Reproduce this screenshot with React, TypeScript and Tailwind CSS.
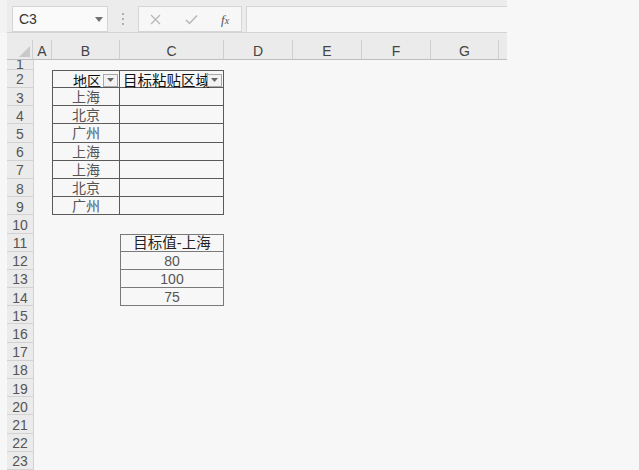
import React from "react";

const ROWS_H: number[] = (() => {
  const a = [9.5, 18.5];
  for (let i = 3; i <= 23; i++) a.push(18.19);
  return a;
})();

const CJK = "font-['Liberation_Sans','Noto_Sans_CJK_SC',sans-serif]";

function FilterBtn() {
  return (
    <div className="absolute right-[1px] top-[3px] w-[15px] h-[13px] border border-[#a8a8a8] bg-[#f2f2f2] flex items-center justify-center">
      <svg width="7" height="4" viewBox="0 0 7 4">
        <path d="M0 0 H7 L3.5 4 Z" fill="#666" />
      </svg>
    </div>
  );
}

function Row({ n }: { n: number }) {
  const h = ROWS_H[n - 1];
  const inT1 = n >= 2 && n <= 9;
  const inT2 = n >= 11 && n <= 14;
  const places: Record<number, string> = { 3: "上海", 4: "北京", 5: "广州", 6: "上海", 7: "上海", 8: "北京", 9: "广州" };
  const vals: Record<number, string> = { 12: "80", 13: "100", 14: "75" };

  let bCls = "w-[68px] h-full relative flex items-center justify-center pt-[1px]";
  let cCls = "w-[104px] h-full relative flex items-center justify-center pt-[1px]";
  if (inT1) {
    bCls += " border-l border-r border-b border-[#5a5a5a]";
    cCls += " border-r border-b border-[#5a5a5a]";
    if (n === 2) {
      bCls += " border-t";
      cCls += " border-t";
    }
  }
  if (inT2) {
    cCls += " border-l border-r border-b border-[#7a7a7a]";
    if (n === 11) cCls += " border-t";
  }

  return (
    <div className="flex" style={{ height: h }}>
      <div className="w-[7px]" />
      <div
        className={
          "w-[27px] h-full bg-[#ebebeb] border-b border-r border-[#d2d2d2] flex justify-center overflow-hidden text-[14px] text-[#555] leading-none " +
          (n === 1 ? "items-end" : "items-center pt-[2px]")
        }
      >
        <span className={n === 1 ? "mb-[-2px]" : ""}>{n}</span>
      </div>
      <div className="w-[18px]" />
      <div className={bCls}>
        {n === 2 && (
          <>
            <span className={`absolute right-[18px] top-[0px] text-[14px] text-[#111] ${CJK}`}>地区</span>
            <FilterBtn />
          </>
        )}
        {places[n] && <span className={`text-[14px] text-[#555] ${CJK} leading-none`}>{places[n]}</span>}
      </div>
      <div className={cCls}>
        {n === 2 && (
          <>
            <span className={`absolute left-[3px] top-[0px] text-[14.5px] text-[#111] whitespace-nowrap ${CJK}`}>目标粘贴区域</span>
            <FilterBtn />
          </>
        )}
        {n === 11 && <span className={`text-[14.5px] text-[#222] ${CJK} leading-none`}>目标值-上海</span>}
        {vals[n] && <span className={`text-[14px] text-[#555] ${CJK} leading-none`}>{vals[n]}</span>}
      </div>
    </div>
  );
}

export default function App() {
  const cols: [string, number][] = [
    ["A", 19],
    ["B", 68],
    ["C", 104],
    ["D", 69],
    ["E", 69],
    ["F", 69],
    ["G", 68],
  ];
  return (
    <div className="w-[639px] h-[470px] bg-[#f7f7f7] overflow-hidden font-['Liberation_Sans',sans-serif]">
      {/* toolbar */}
      <div className="flex h-[33px]">
        <div className="w-[507px] h-[33px] bg-[#ececec] border-b border-[#d4d4d4] flex items-start pt-[6px]">
          <div className="w-[7px] bg-[#f3f3f3] -mt-[6px] h-[33px]" />
          <div className="ml-[5px] w-[96px] h-[26px] bg-[#fafafa] border border-[#d6d6d6] flex items-center relative">
            <span className="ml-[6px] text-[14px] text-[#333]">C3</span>
            <svg className="absolute left-[82px] top-[10px]" width="8" height="5" viewBox="0 0 8 5">
              <path d="M0 0 H8 L4 5 Z" fill="#707070" />
            </svg>
          </div>
          <div className="w-[30px] h-[26px] flex flex-col items-center justify-center gap-[3px]">
            <div className="w-[2px] h-[2px] bg-[#b0b0b0]" />
            <div className="w-[2px] h-[2px] bg-[#b0b0b0]" />
            <div className="w-[2px] h-[2px] bg-[#b0b0b0]" />
          </div>
          <div className="w-[104px] h-[26px] bg-[#f7f7f7] border border-[#d6d6d6] flex items-center">
            <svg className="ml-[11px]" width="11" height="11" viewBox="0 0 11 11">
              <path d="M1 1 L10 10 M10 1 L1 10" stroke="#b8b8b8" strokeWidth="1.3" />
            </svg>
            <svg className="ml-[24px]" width="13" height="11" viewBox="0 0 13 11">
              <path d="M1 6 L4.5 9.5 L12 1.5" stroke="#b8b8b8" strokeWidth="1.5" fill="none" />
            </svg>
            <span className="ml-[23px] text-[13px] italic text-[#555] font-['Liberation_Serif',serif] leading-none">
              f<span className="text-[10px]">x</span>
            </span>
          </div>
          <div className="ml-[4px] flex-1 h-[26px] bg-[#f7f7f7] border-t border-l border-[#d6d6d6]" />
        </div>
      </div>
      {/* column header */}
      <div className="flex h-[27px]">
        <div className="w-[7px] h-full" />
        <div className="w-[500px] h-full bg-[#ebebeb] border-b border-[#bdbdbd] flex items-end">
          <div className="w-[26px] h-[19px] relative border-r border-[#d0d0d0]">
            <svg className="absolute right-[2px] bottom-[2px]" width="11" height="11" viewBox="0 0 11 11">
              <path d="M11 0 V11 H0 Z" fill="#c9c9c9" />
            </svg>
          </div>
          {cols.map(([c, w]) => (
            <div
              key={c}
              style={{ width: w }}
              className="h-[19px] border-r border-[#d0d0d0] flex items-end justify-center pb-[1px] text-[14px] leading-none text-[#444]"
            >
              {c}
            </div>
          ))}
        </div>
      </div>
      {Array.from({ length: 23 }, (_, i) => (
        <Row key={i} n={i + 1} />
      ))}
    </div>
  );
}
